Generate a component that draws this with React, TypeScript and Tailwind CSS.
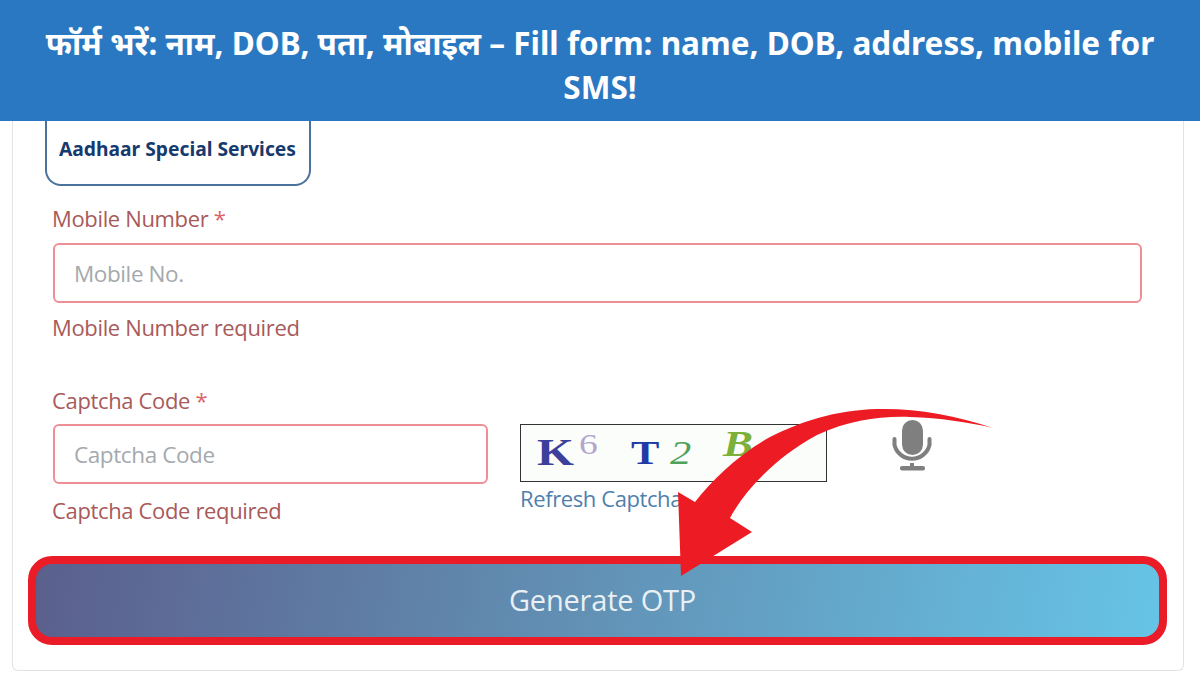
import React from 'react';

const FONT = "font-['Open_Sans','Noto_Sans',sans-serif]";

interface FieldProps {
    label: string;
    placeholder: string;
    error: string;
    className: string;
    labelGap: string;
    errorGap: string;
}

const Field = ({ label, placeholder, error, className, labelGap, errorGap }: FieldProps) => (
    <div className={className}>
        <div className="h-[24px] -ml-px text-[22px] leading-[22px] text-[#a85a5a] tracking-[-0.35px]">
            {label} <span className="text-[#d9656b]">*</span>
        </div>
        <div className={`${labelGap} h-[60px] flex items-center pt-[2px] pl-[19px] border-2 border-[#ee8f95] rounded-[6px] text-[22.5px] text-[#a4a9ad] tracking-[-0.4px]`}>
            {placeholder}
        </div>
        <div className={`${errorGap} h-[24px] -ml-px text-[22px] leading-[22px] text-[#a85a5a] tracking-[-0.35px]`}>{error}</div>
    </div>
);

const Captcha = () => (
    <div className="flex items-start w-[307px] h-[58px] border border-[#333] bg-[#fbfdfb] font-['Liberation_Serif',serif] pl-[16px]">
        <span className="mt-[7px] text-[38px] leading-[40px] font-bold text-[#3c3f9c] scale-x-125 origin-left w-[42px]">K</span>
        <span className="mt-[4px] text-[30px] leading-[30px] text-[#b2a6cb] scale-x-125 origin-left w-[52px]">6</span>
        <span className="mt-[8px] text-[34px] leading-[40px] font-bold text-[#1f3ba6] scale-x-125 origin-left w-[39px]">T</span>
        <span className="mt-[8px] text-[34px] leading-[40px] italic text-[#4ea35a] scale-x-125 origin-left w-[53px]">2</span>
        <span className="text-[36px] leading-[38px] italic font-bold text-[#7cb03a] scale-x-125 origin-left">B</span>
    </div>
);

const Mic = () => (
    <svg width="40" height="52" viewBox="0 0 40 52" fill="none">
        <rect x="10" y="0" width="21" height="35" rx="10.5" fill="#7f7f7f" />
        <path d="M2.5 19v6a18 18 0 0 0 35 0v-6" stroke="#7f7f7f" strokeWidth="4" strokeLinecap="round" />
        <path d="M20 43v6" stroke="#7f7f7f" strokeWidth="4" />
        <rect x="8" y="46" width="25" height="4.5" rx="2" fill="#7f7f7f" />
    </svg>
);

export default function App() {
    return (
        <div className={`relative w-[1200px] h-[675px] overflow-hidden bg-white ${FONT}`}>
            {/* Banner */}
            <div className="h-[121px] bg-[#2b78c2] flex items-center justify-center pt-[8px] px-[40px]">
                <h1 className="text-center text-white font-bold text-[31.5px] leading-[44px] font-['Noto_Sans',sans-serif]">
                    फॉर्म भरें: नाम, DOB, पता, मोबाइल – Fill form: name, DOB, address, mobile for SMS!
                </h1>
            </div>

            {/* Card */}
            <div className="ml-[12px] w-[1172px] h-[550px] border border-t-0 border-[#e3e3e3] rounded-b-[6px] pl-[32px] pr-[15px]">
                <div className="w-[266px] h-[65px] border-2 border-t-0 border-[#4a729c] rounded-b-[16px] pt-[15px] pl-[12px] text-[19.25px] leading-[26px] font-bold text-[#173a6e] font-['Noto_Sans',sans-serif]">
                    Aadhaar Special Services
                </div>

                <div className="pl-[8px] pr-[26px]">
                    <Field className="mt-[21px]" labelGap="mt-[12px]" errorGap="mt-[13px]" label="Mobile Number" placeholder="Mobile No." error="Mobile Number required" />

                    <div className="mt-[49px] flex items-start">
                        <Field className="w-[435px]" labelGap="mt-[11px]" errorGap="mt-[15px]" label="Captcha Code" placeholder="Captcha Code" error="Captcha Code required" />
                        <div className="ml-[32px] mt-[35px]">
                            <Captcha />
                            <div className="mt-[3px] text-[22px] leading-[26px] text-[#4f7fad] tracking-[-0.4px]">Refresh Captcha</div>
                        </div>
                        <div className="ml-[65px] mt-[31px]">
                            <Mic />
                        </div>
                    </div>
                </div>

                {/* Button */}
                <div className="-ml-[17px] mt-[33px] w-[1139px] h-[89px] border-[8px] border-[#e91c27] rounded-[24px] bg-[linear-gradient(100deg,#5b5f8c_0%,#6292b6_50%,#66c4e6_100%)] flex items-center justify-center pl-[10px] pb-[2px] text-[29px] text-[#e9eff3] tracking-[-0.2px]">
                    Generate OTP
                </div>
            </div>

            {/* Arrow annotation */}
            <svg className="absolute left-0 top-0 pointer-events-none" width="1200" height="675" viewBox="0 0 1200 675" fill="none">
                <path
                    d="M993 428 C955 415 915 408 877 409 C835 410 800 422 770 437 C738 455 712 480 695 502 L678 492 L681 576 L752 532 L730 518 C745 490 775 458 817 435 C850 420 880 416 910 417 C940 418 968 422 993 428 Z"
                    fill="#ed1c24"
                />
            </svg>
        </div>
    );
}
